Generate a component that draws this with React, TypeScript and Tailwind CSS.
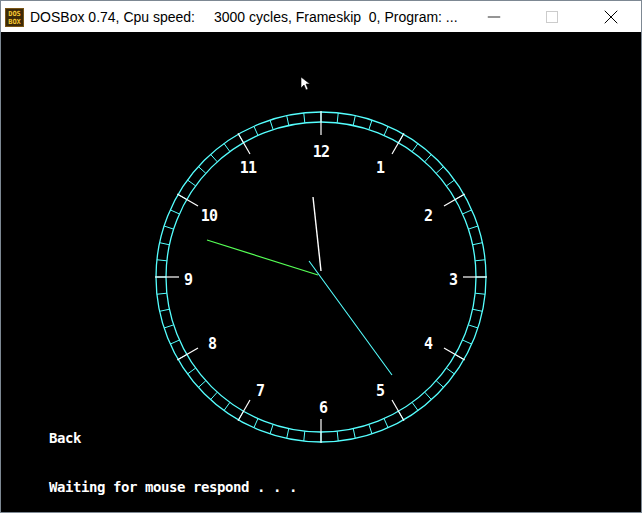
import { Minus, X } from 'lucide-react'

const CX = 320
const CY = 245

const labels: [string, number, number][] = [
  ['12', 320, 119],
  ['1', 379, 135],
  ['2', 427, 183],
  ['3', 452, 247],
  ['4', 427, 311],
  ['5', 379, 358],
  ['6', 322, 375],
  ['7', 259, 358],
  ['8', 211, 311],
  ['9', 187, 247],
  ['10', 208, 183],
  ['11', 247, 135],
]

const polar = (deg: number, r: number) => {
  const a = (deg * Math.PI) / 180
  return [CX + Math.sin(a) * r, CY - Math.cos(a) * r]
}

const DosIcon = () => (
  <svg width="19" height="19" viewBox="0 0 19 19">
    <rect x="0" y="0" width="19" height="19" fill="#7a5514" />
    <rect x="1" y="1" width="17" height="17" fill="#3d2a08" />
    <text x="9.5" y="8" textAnchor="middle" fontSize="7" fontWeight="bold" fill="#f5c631" fontFamily="DejaVu Sans Mono, monospace">DOS</text>
    <text x="9.5" y="16" textAnchor="middle" fontSize="7" fontWeight="bold" fill="#f5c631" fontFamily="DejaVu Sans Mono, monospace">BOX</text>
  </svg>
)

const Clock = () => {
  const ticks = Array.from({ length: 60 }, (_, i) => i)
  return (
    <svg width="640" height="480" viewBox="0 0 640 480" className="absolute inset-0">
      <circle cx={CX} cy={CY} r="165" fill="none" stroke="#55ffff" strokeWidth="1.3" />
      <circle cx={CX} cy={CY} r="155" fill="none" stroke="#55ffff" strokeWidth="1.3" />
      {ticks.map((i) => {
        const [x1, y1] = polar(i * 6, 155)
        const [x2, y2] = polar(i * 6, 165)
        return <line key={i} x1={x1} y1={y1} x2={x2} y2={y2} stroke="#55ffff" strokeWidth="1" />
      })}
      {ticks.filter((i) => i % 5 === 0).map((i) => {
        const [x1, y1] = polar(i * 6, 142)
        const [x2, y2] = polar(i * 6, 166)
        return <line key={'h' + i} x1={x1} y1={y1} x2={x2} y2={y2} stroke="#ffffff" strokeWidth="1.2" />
      })}
      {labels.map(([t, x, y]) => (
        <text
          key={t}
          x={x}
          y={y + 5.5}
          textAnchor="middle"
          fill="#ffffff"
          fontSize="15"
          fontWeight="bold"
          fontFamily="DejaVu Sans Mono, monospace"
          letterSpacing="-0.8"
        >
          {t}
        </text>
      ))}
      {/* hands */}
      <line x1="312" y1="165" x2="320" y2="239" stroke="#ffffff" strokeWidth="1.4" />
      <line x1="206" y1="208" x2="317" y2="243" stroke="#55ff55" strokeWidth="1.2" />
      <line x1="308" y1="229" x2="391" y2="343" stroke="#55ffff" strokeWidth="1.1" />
      {/* mouse cursor */}
      <path d="M300 45 L300 56 L303 53 L305 58 L307 57 L305 52 L309 52 Z" fill="#ffffff" stroke="#000000" strokeWidth="0.6" />
    </svg>
  )
}

const App = () => {
  return (
    <div className="w-[642px] h-[513px] border border-[#7d8893] flex flex-col bg-black overflow-hidden">
      <div className="h-[31px] bg-white flex flex-row items-center text-[14px] text-black font-['Liberation_Sans',Arial,sans-serif]">
        <div className="pl-[4px] pr-[6px] pt-[2px]">
          <DosIcon />
        </div>
        <div className="whitespace-pre flex-1 pt-[1px]">
          <span>DOSBox 0.74, Cpu speed:</span>
          <span className="pl-[19px]">3000 cycles, Frameskip  0, Program: ...</span>
        </div>
        <div className="flex flex-row items-center">
          <div className="w-[58px] flex justify-center">
            <Minus size={20} strokeWidth={1} />
          </div>
          <div className="w-[58px] flex justify-center">
            <div className="w-[12px] h-[12px] border border-[#cccccc]" />
          </div>
          <div className="w-[60px] flex justify-center">
            <X size={24} strokeWidth={1} />
          </div>
        </div>
      </div>
      <div className="relative flex-1 bg-black">
        <Clock />
        <div className="relative pt-[399px] pl-[48px] text-white font-bold text-[14px] leading-[14px] tracking-[-0.43px] whitespace-pre font-['DejaVu_Sans_Mono',monospace]">
          <div>Back</div>
          <div className="pt-[35px]">Waiting for mouse respond . . .</div>
        </div>
      </div>
    </div>
  )
}

export default App
